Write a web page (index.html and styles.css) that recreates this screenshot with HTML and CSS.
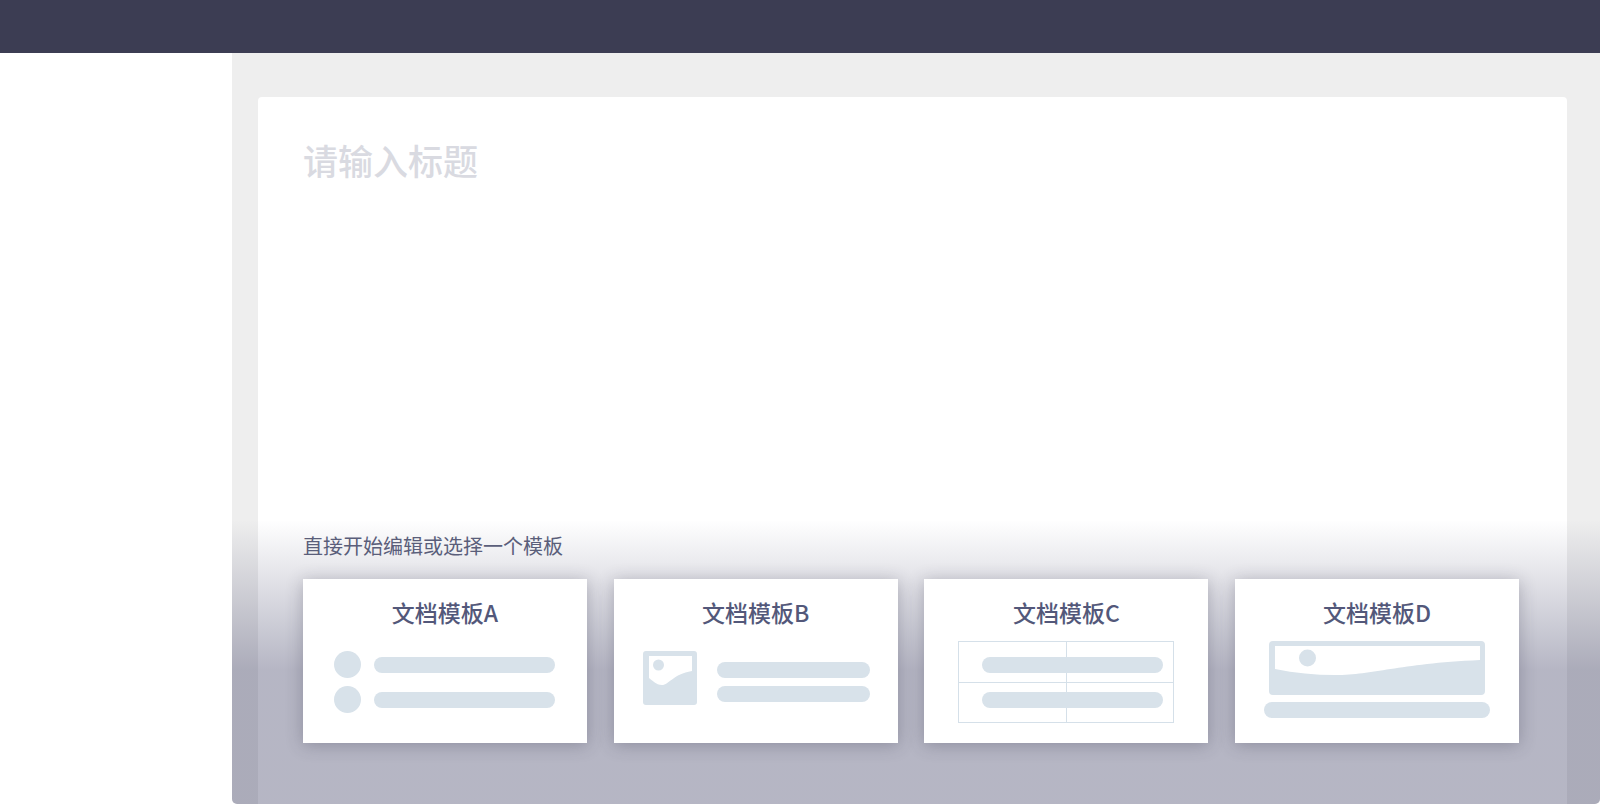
FILE: index.html
```html
<!DOCTYPE html>
<html lang="zh-CN">
<head>
<meta charset="utf-8">
<title>文档模板</title>
<link rel="stylesheet" href="styles.css">
</head>
<body>
<header class="topbar"></header>
<div class="layout">
  <aside class="sidebar"></aside>
  <main class="workspace">
    <section class="paper">
      <h1 class="doc-title">请输入标题</h1>
    </section>
    <section class="picker">
      <p class="picker-hint">直接开始编辑或选择一个模板</p>
      <div class="cards">
        <article class="card">
          <h2 class="card-title">文档模板A</h2>
          <div class="preview preview-a">
            <span class="dot"></span><span class="bar"></span>
            <span class="dot"></span><span class="bar"></span>
          </div>
        </article>
        <article class="card">
          <h2 class="card-title">文档模板B</h2>
          <div class="preview preview-b">
            <svg class="pic" viewBox="0 0 54 54" width="54" height="54" aria-hidden="true">
              <path fill="#d8e2ea" fill-rule="evenodd" d="M3 0h48a3 3 0 0 1 3 3v48a3 3 0 0 1-3 3H3a3 3 0 0 1-3-3V3a3 3 0 0 1 3-3zM6 5v22c3 2 7 7 13 7 7 0 11-11 30-14V5z"/>
              <circle cx="15.5" cy="14" r="5.5" fill="#d8e2ea"/>
            </svg>
            <div class="bars"><span class="bar"></span><span class="bar"></span></div>
          </div>
        </article>
        <article class="card">
          <h2 class="card-title">文档模板C</h2>
          <div class="preview preview-c">
            <span class="cell"></span><span class="cell"></span><span class="cell"></span><span class="cell"></span>
            <div class="table-bars"><span class="bar"></span><span class="bar"></span></div>
          </div>
        </article>
        <article class="card">
          <h2 class="card-title">文档模板D</h2>
          <div class="preview preview-d">
            <svg class="banner" viewBox="0 0 216 54" width="216" height="54" aria-hidden="true">
              <path fill="#d8e2ea" fill-rule="evenodd" d="M4 0h208a4 4 0 0 1 4 4v46a4 4 0 0 1-4 4H4a4 4 0 0 1-4-4V4a4 4 0 0 1 4-4zM6 5v23c20 4 40 6 60 6 40 0 60-11 145-15V5z"/>
              <circle cx="38.5" cy="17" r="8.5" fill="#d8e2ea"/>
            </svg>
            <span class="bar"></span>
          </div>
        </article>
      </div>
    </section>
  </main>
</div>
</body>
</html>
```
FILE: styles.css
```css
* { box-sizing: border-box; }
html, body { height: 100%; }
body {
  margin: 0;
  display: flex;
  flex-direction: column;
  height: 804px;
  overflow: hidden;
  background: #fff;
  font-family: "Noto Sans CJK SC", "Noto Sans", sans-serif;
}
.topbar { flex: 0 0 53px; background: #3c3d53; }
.layout { flex: 1; display: flex; min-height: 0; }
.sidebar { flex: 0 0 232px; background: #fff; }
.workspace {
  position: relative;
  flex: 1;
  display: flex;
  background: #eee;
  padding: 44px 33px 0 26px;
  border-radius: 0 0 5px 5px;
  overflow: hidden;
}
.paper {
  flex: 1;
  background: #fff;
  border-radius: 4px 4px 0 0;
  padding: 38px 45px 0;
}
.doc-title {
  margin: 0;
  font-size: 35px;
  line-height: 50px;
  font-weight: 500;
  color: #d9dae1;
}
.picker {
  position: absolute;
  left: 0;
  right: 0;
  bottom: 0;
  height: 284px;
  padding: 11px 81px 0 71px;
  background: linear-gradient(to bottom, rgba(62,63,100,0) 0, rgba(62,63,100,.38) 150px);
}
.picker-hint {
  margin: 0 0 18px;
  font-size: 20px;
  line-height: 30px;
  color: #5a5e7a;
}
.cards { display: flex; justify-content: space-between; }
.card {
  width: 284px;
  height: 164px;
  background: #fff;
  box-shadow: 0 2px 16px rgba(50,50,70,.3);
  padding-top: 14px;
}
.card-title {
  margin: 0 0 1px;
  text-align: center;
  font-size: 23px;
  line-height: 38px;
  font-weight: 500;
  color: #53587a;
}
.bar { display: block; height: 16px; border-radius: 8px; background: #d8e2ea; }
.dot { display: block; width: 27px; height: 27px; border-radius: 50%; background: #d8e2ea; }
.preview { position: relative; }
.preview-a {
  display: grid;
  grid-template-columns: 27px 181px;
  justify-content: start;
  align-items: center;
  column-gap: 13px;
  row-gap: 8px;
  padding: 19px 0 0 31px;
}
.preview-b {
  display: flex;
  align-items: flex-start;
  gap: 20px;
  padding: 19px 0 0 29px;
}
.pic, .banner { display: block; flex: none; }
.bars { display: flex; flex-direction: column; gap: 8px; width: 153px; margin-top: 11px; }
.preview-c {
  display: grid;
  grid-template-columns: 108px 108px;
  grid-auto-rows: 41px;
  width: 216px;
  margin: 10px 0 0 34px;
}
.cell { border: 1px solid #d5e0e9; }
.cell:nth-child(odd) { border-right: 0; }
.cell:nth-child(-n+2) { border-bottom: 0; }
.table-bars {
  position: absolute;
  left: 24px;
  top: 16px;
  width: 181px;
  display: flex;
  flex-direction: column;
  gap: 19px;
}
.preview-d { padding: 9px 0 0 29px; }
.preview-d .banner { margin-left: 5px; }
.preview-d .bar { width: 226px; margin-top: 7px; }
```
